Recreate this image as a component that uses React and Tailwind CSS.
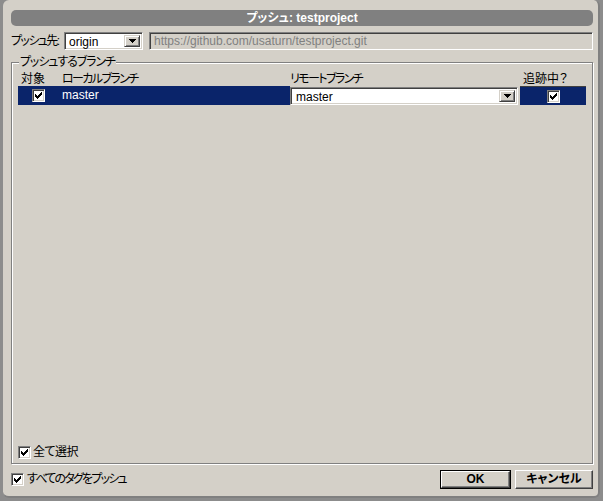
import React from "react";

const CheckMark = () => (
  <svg width="7" height="7" viewBox="0 0 7 7" shapeRendering="crispEdges">
    <rect x="6" y="0" width="1" height="1" fill="black" />
    <rect x="5" y="1" width="2" height="1" fill="black" />
    <rect x="0" y="2" width="1" height="1" fill="black" />
    <rect x="4" y="2" width="3" height="1" fill="black" />
    <rect x="0" y="3" width="2" height="1" fill="black" />
    <rect x="3" y="3" width="3" height="1" fill="black" />
    <rect x="0" y="4" width="5" height="1" fill="black" />
    <rect x="1" y="5" width="3" height="1" fill="black" />
    <rect x="2" y="6" width="1" height="1" fill="black" />
  </svg>
);

const Check = () => (
  <span className="inline-flex shrink-0 w-[13px] h-[13px] bg-white border border-t-[#808080] border-l-[#808080] border-b-white border-r-white shadow-[inset_1px_1px_0_#404040,inset_-1px_-1px_0_#d4d0c8] items-center justify-center">
    <CheckMark />
  </span>
);

const Arrow = () => (
  <span className="flex shrink-0 w-[16px] h-full bg-[#d4d0c8] border border-t-[#d4d0c8] border-l-[#d4d0c8] border-b-[#404040] border-r-[#404040] shadow-[inset_1px_1px_0_white,inset_-1px_-1px_0_#808080] items-center justify-center">
    <svg width="7" height="4" viewBox="0 0 7 4" shapeRendering="crispEdges">
      <rect x="0" y="0" width="7" height="1" fill="black" />
      <rect x="1" y="1" width="5" height="1" fill="black" />
      <rect x="2" y="2" width="3" height="1" fill="black" />
      <rect x="3" y="3" width="1" height="1" fill="black" />
    </svg>
  </span>
);

const sunken =
  "border border-t-[#808080] border-l-[#808080] border-b-white border-r-white shadow-[inset_1px_1px_0_#404040,inset_-1px_-1px_0_#d4d0c8]";

export default function App() {
  return (
    <div className="w-[603px] h-[501px] bg-[#8c8c8c] pl-[3px] overflow-hidden font-['Liberation_Sans','Noto_Sans_CJK_JP',sans-serif] [font-feature-settings:'palt'] text-black text-[12px]">
      <div className="w-[597px] h-[498px] bg-[#d4d0c8] rounded-[6px] border-r-2 border-b-2 border-[#808080] pl-[8px] pr-[5px] pt-[10px] pb-[7px] flex flex-col">
        <div className="h-[16px] rounded-[5px] bg-[#808080] text-white font-bold text-[12px] leading-[16px] text-center">
          プッシュ: testproject
        </div>

        <div className="mt-[6px] h-[18px] flex items-center">
          <span className="w-[53px] shrink-0 whitespace-nowrap tracking-[-1.6px] leading-[14px]">プッシュ先:</span>
          <div className={`w-[79px] shrink-0 h-[18px] bg-white flex items-stretch p-[2px] ${sunken}`}>
            <span className="flex-1 pl-[2px] leading-[14px]">origin</span>
            <Arrow />
          </div>
          <div className={`ml-[6px] flex-1 h-[18px] bg-[#d4d0c8] text-[#808080] pl-[4px] leading-[16px] ${sunken}`}>
            https://github.com/usaturn/testproject.git
          </div>
        </div>

        <fieldset className="mt-[5px] flex-1 min-h-0 border border-[#808080] shadow-[inset_1px_1px_0_white,1px_1px_0_white] px-[6px] pb-[4px] flex flex-col">
          <legend className="ml-[1px] px-[1px] leading-[14px] tracking-[-1.1px] bg-[#d4d0c8]">プッシュするブランチ</legend>

          <div className="grid grid-cols-[44px_228px_230px_66px] h-[17px] items-end leading-[14px] whitespace-nowrap">
            <span className="pl-[3px]">対象</span>
            <span className="tracking-[-1.6px]">ローカルブランチ</span>
            <span className="tracking-[-1.6px]">リモートブランチ</span>
            <span className="pl-[3px]">追跡中？</span>
          </div>

          <div className="grid grid-cols-[44px_228px_230px_66px] h-[19px]">
            <div className="bg-[#0a246a] flex items-center pl-[14px]">
              <Check />
            </div>
            <div className="bg-[#0a246a] text-white leading-[14px] pt-[2px]">master</div>
            <div className="bg-[#d4d0c8] flex items-center">
              <div className={`w-[228px] h-[18px] bg-white flex items-stretch p-[2px] ${sunken}`}>
                <span className="flex-1 pl-[3px] leading-[14px]">master</span>
                <Arrow />
              </div>
            </div>
            <div className="bg-[#0a246a] border-t border-[#404040] flex items-center pl-[27px]">
              <Check />
            </div>
          </div>

          <div className="flex-1" />

          <div className="flex items-center gap-[2px] h-[14px]">
            <Check />
            <span className="leading-[14px] tracking-[-0.5px]">全て選択</span>
          </div>
        </fieldset>

        <div className="mt-[5px] h-[20px] flex items-center">
          <Check />
          <span className="ml-[3px] leading-[14px] tracking-[-1.8px]">すべてのタグをプッシュ</span>
          <div className="ml-auto flex gap-[4px] items-center">
            <div className="w-[71px] h-[19px] border border-black">
              <div className="w-full h-full border border-t-white border-l-white border-b-[#404040] border-r-[#404040] shadow-[inset_-1px_-1px_0_#808080] flex items-center justify-center font-bold leading-[14px]">
                OK
              </div>
            </div>
            <div className="w-[78px] h-[19px] border border-t-white border-l-white border-b-[#404040] border-r-[#404040] shadow-[inset_-1px_-1px_0_#808080] flex items-center justify-center font-bold leading-[14px]">
              キャンセル
            </div>
          </div>
        </div>
      </div>
    </div>
  );
}
